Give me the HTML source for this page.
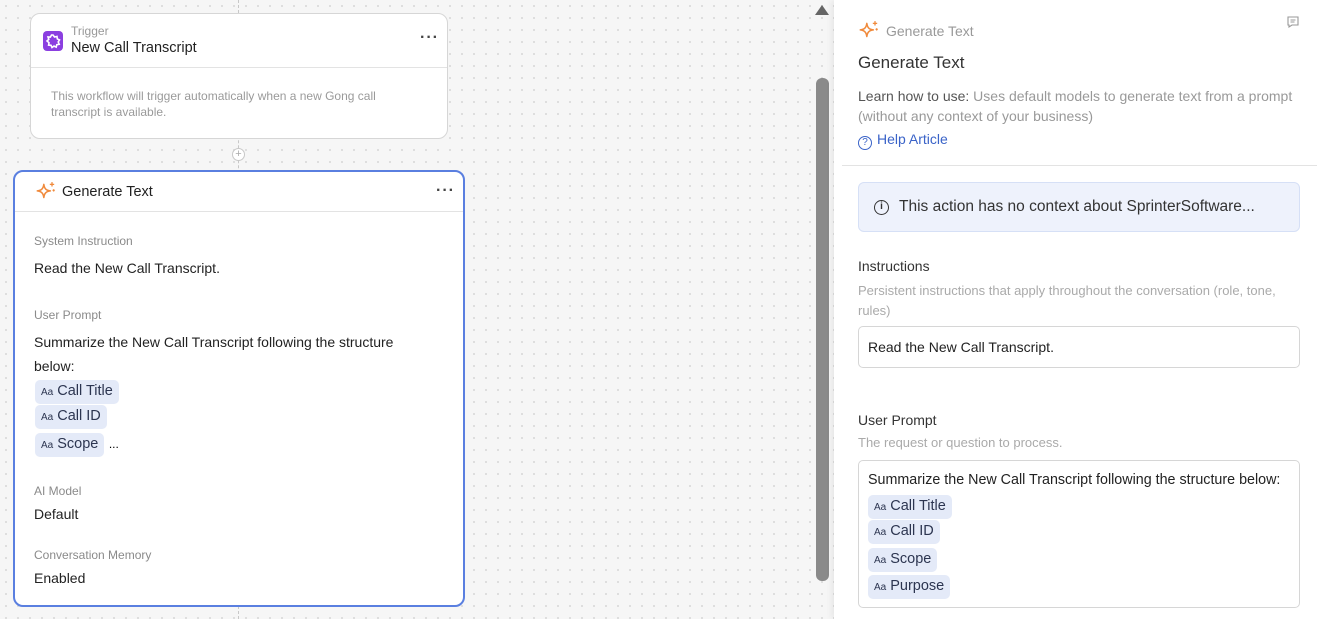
<!DOCTYPE html>
<html><head><meta charset="utf-8"><style>
*{box-sizing:border-box;margin:0;padding:0}
body{width:1317px;height:619px;overflow:hidden;font-family:"Liberation Sans",sans-serif;background:#f6f6f6;position:relative;
background-image:radial-gradient(#dcdcdc 1px,transparent 1.2px);background-size:12px 12px}
.abs{position:absolute}
.card{position:absolute;background:#fff;border:1px solid #d6d6d6;border-radius:10px}
.dots{position:absolute;font-size:16px;color:#444;letter-spacing:1px;font-weight:bold}
.lbl{position:absolute;font-size:12px;color:#8a8a8a}
.val{position:absolute;font-size:14px;color:#222}
.chip{display:inline-block;background:#e4eaf8;border-radius:5px;padding:2px 6px 2px 6px;font-size:14.5px;color:#2c3550;line-height:18px}
.chip small{font-size:10px;margin-right:4px}
</style></head><body>
<div class="abs" style="left:238px;top:0;height:619px;border-left:1px dashed #c8c8c8"></div>
<div class="abs" style="left:232px;top:148px;width:13px;height:13px;border:1px solid #c8c8c8;border-radius:50%;background:#fff;font-size:11px;line-height:10px;text-align:center;color:#aaa">+</div>

<div class="card" style="left:30px;top:13px;width:418px;height:126px">
 <div class="abs" style="left:12px;top:17px;width:20px;height:20px;background:#8b3fe0;border-radius:4px"><svg width="20" height="20" viewBox="0 0 20 20"><path d="M10 4l1.5 2 2.5-.5 .3 2.4 2.2 1.1-1.3 2 1 2.3-2.4.4-.6 2.4-2.2-1-2 1.4-1-2.2-2.4-.2.4-2.4L4 10l1.8-1.6L5 6l2.4.1L8.5 4z" fill="none" stroke="#fff" stroke-width="1.6"/></svg></div>
 <div class="abs" style="left:40px;top:10px;font-size:12px;color:#999">Trigger</div>
 <div class="abs" style="left:40px;top:26px;font-size:14.5px;color:#222">New Call Transcript</div>
 <div class="dots" style="left:389px;top:19px;line-height:10px">···</div>
 <div class="abs" style="left:0;top:53px;width:100%;border-top:1px solid #e3e3e3"></div>
 <div class="abs" style="left:20px;top:74px;width:370px;font-size:12px;line-height:16px;color:#9a9a9a">This workflow will trigger automatically when a new Gong call transcript is available.</div>
</div>

<div class="card" style="left:13px;top:170px;width:452px;height:437px;border:2px solid #5a7fe0">
 <svg class="abs" style="left:19px;top:8px" width="24" height="24" viewBox="0 0 22 22"><path d="M9 4c.6 4 2 5.5 6 6-4 .6-5.4 2-6 6-.6-4-2-5.4-6-6 4-.5 5.4-2 6-6z" fill="none" stroke="#f08a3c" stroke-width="1.4" stroke-linejoin="round"/><path d="M16.5 2v4M14.5 4h4M18 8.5v2M17 9.5h2" stroke="#f08a3c" stroke-width="1.2"/></svg>
 <div class="abs" style="left:47px;top:12px;font-size:14.5px;color:#222">Generate Text</div>
 <div class="dots" style="left:421px;top:14px;line-height:10px">···</div>
 <div class="abs" style="left:0;top:39px;width:100%;border-top:1px solid #e3e3e3"></div>
 <div class="lbl" style="left:19px;top:62px">System Instruction</div>
 <div class="val" style="left:19px;top:88px">Read the New Call Transcript.</div>
 <div class="lbl" style="left:19px;top:136px">User Prompt</div>
 <div class="val" style="left:19px;top:158px;width:400px;line-height:24px">Summarize the New Call Transcript following the structure below:</div>
 <div class="abs" style="left:20px;top:208px"><span class="chip"><small>Aa</small>Call Title</span></div>
 <div class="abs" style="left:20px;top:233px"><span class="chip"><small>Aa</small>Call ID</span></div>
 <div class="abs" style="left:20px;top:261px"><span class="chip"><small>Aa</small>Scope</span> <span style="font-size:12px">...</span></div>
 <div class="lbl" style="left:19px;top:312px">AI Model</div>
 <div class="val" style="left:19px;top:334px">Default</div>
 <div class="lbl" style="left:19px;top:376px">Conversation Memory</div>
 <div class="val" style="left:19px;top:398px">Enabled</div>
</div>

<div class="abs" style="left:815px;top:5px;width:0;height:0;border-left:7px solid transparent;border-right:7px solid transparent;border-bottom:10px solid #666"></div>
<div class="abs" style="left:816px;top:78px;width:13px;height:503px;background:#8a8a8a;border-radius:6px"></div>

<div class="abs" style="left:834px;top:0;width:483px;height:619px;background:#fff;box-shadow:-3px 0 6px rgba(0,0,0,.06)">
 <svg class="abs" style="left:23px;top:19px" width="24" height="24" viewBox="0 0 22 22"><path d="M9 4c.6 4 2 5.5 6 6-4 .6-5.4 2-6 6-.6-4-2-5.4-6-6 4-.5 5.4-2 6-6z" fill="none" stroke="#f08a3c" stroke-width="1.4" stroke-linejoin="round"/><path d="M16.5 2v4M14.5 4h4M18 8.5v2M17 9.5h2" stroke="#f08a3c" stroke-width="1.2"/></svg>
 <div class="abs" style="left:52px;top:23px;font-size:14px;color:#999">Generate Text</div>
 <svg class="abs" style="left:452px;top:15px" width="14" height="14" viewBox="0 0 14 14"><path d="M2 2h10v8H6l-3 2v-2H2z" fill="none" stroke="#999" stroke-width="1.1"/><path d="M4.5 5h5M4.5 7h4" stroke="#999"/></svg>
 <div class="abs" style="left:24px;top:53px;font-size:17px;color:#333">Generate Text</div>
 <div class="abs" style="left:24px;top:86px;width:460px;font-size:14px;line-height:20px;color:#999"><span style="color:#555">Learn how to use:</span> Uses default models to generate text from a prompt (without any context of your business)</div>
 <div class="abs" style="left:24px;top:131px;font-size:14px;color:#3a63c8;line-height:16px"><span style="display:inline-block;width:14px;height:14px;border:1.3px solid #3a63c8;border-radius:50%;font-size:10px;text-align:center;line-height:12px;vertical-align:-1px;margin-right:5px">?</span>Help Article</div>
 <div class="abs" style="left:8px;top:165px;width:475px;border-top:1px solid #e3e3e3"></div>
 <div class="abs" style="left:24px;top:182px;width:442px;height:50px;background:#eef2fc;border:1px solid #d6e0f6;border-radius:6px">
  <span class="abs" style="left:15px;top:17px;width:15px;height:15px;border:1.4px solid #333;border-radius:50%;font-size:10px;text-align:center;line-height:12px;color:#333;font-weight:bold">i</span>
  <div class="abs" style="left:40px;top:15px;font-size:15.5px;color:#333">This action has no context about SprinterSoftware...</div>
 </div>
 <div class="abs" style="left:24px;top:258px;font-size:14px;color:#333">Instructions</div>
 <div class="abs" style="left:24px;top:281px;width:430px;font-size:13px;line-height:20px;color:#aaa">Persistent instructions that apply throughout the conversation (role, tone, rules)</div>
 <div class="abs" style="left:24px;top:326px;width:442px;height:42px;border:1px solid #d6d6d6;border-radius:5px;font-size:14px;color:#222;padding:12px 9px">Read the New Call Transcript.</div>
 <div class="abs" style="left:24px;top:412px;font-size:14px;color:#333">User Prompt</div>
 <div class="abs" style="left:24px;top:435px;font-size:13px;color:#aaa">The request or question to process.</div>
 <div class="abs" style="left:24px;top:460px;width:442px;height:148px;border:1px solid #d6d6d6;border-radius:5px">
  <div class="abs" style="left:9px;top:11px;font-size:14.3px;color:#222">Summarize the New Call Transcript following the structure below:</div>
  <div class="abs" style="left:9px;top:34px"><span class="chip"><small>Aa</small>Call Title</span></div>
  <div class="abs" style="left:9px;top:59px"><span class="chip"><small>Aa</small>Call ID</span></div>
  <div class="abs" style="left:9px;top:87px"><span class="chip"><small>Aa</small>Scope</span></div>
  <div class="abs" style="left:9px;top:114px"><span class="chip"><small>Aa</small>Purpose</span></div>
 </div>
</div>
</body></html>
